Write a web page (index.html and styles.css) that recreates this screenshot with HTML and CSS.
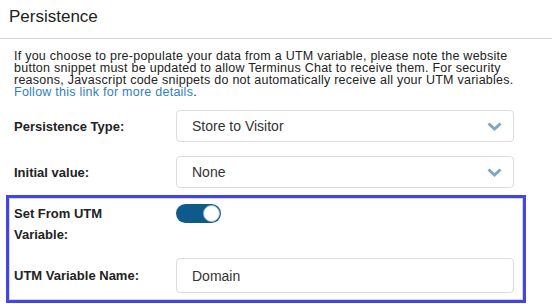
FILE: index.html
```html
<!DOCTYPE html>
<html lang="en">
<head>
<meta charset="UTF-8">
<meta name="viewport" content="width=device-width, initial-scale=1.0">
<title>Persistence</title>
<link rel="stylesheet" href="styles.css">
</head>
<body>
<div class="panel">
  <div class="panel-header">Persistence</div>

  <div class="panel-body">
    <p class="intro">
      If you choose to pre-populate your data from a UTM variable, please note the website<br>
      button snippet must be updated to allow Terminus Chat to receive them. For security<br>
      reasons, Javascript code snippets do not automatically receive all your UTM variables.<br>
      <a href="#">Follow this link for more details</a>.
    </p>

    <div class="row">
      <label class="row-label">Persistence Type:</label>
      <div class="select">
        <span>Store to Visitor</span>
        <svg class="chevron" width="15" height="9" viewBox="0 0 15 9"><polyline points="1.5,1.5 7.5,7 13.5,1.5" /></svg>
      </div>
    </div>

    <div class="row">
      <label class="row-label">Initial value:</label>
      <div class="select">
        <span>None</span>
        <svg class="chevron" width="15" height="9" viewBox="0 0 15 9"><polyline points="1.5,1.5 7.5,7 13.5,1.5" /></svg>
      </div>
    </div>

    <div class="highlight">
      <div class="row row-top">
        <label class="row-label row-label-wrap">Set From UTM Variable:</label>
        <span class="toggle"><span class="knob"></span></span>
      </div>

      <div class="row row-last">
        <label class="row-label">UTM Variable Name:</label>
        <div class="text-input">Domain</div>
      </div>
    </div>
  </div>
</div>
</body>
</html>
```

FILE: styles.css
```css
body {
  margin: 0;
  font-family: "Liberation Sans", Arial, sans-serif;
  color: #222;
  background: #fff;
}
.panel {
  width: 552px;
}
.panel-header {
  padding: 7px 9px 11px;
  font-size: 17px;
  line-height: 20px;
  color: #222;
  border-bottom: 1px solid #d6d6d6;
}
.panel-body {
  padding: 0 38px 0 14px;
}
.intro {
  margin: 11px 0 12px;
  font-size: 12.5px;
  line-height: 12px;
  letter-spacing: 0.25px;
  white-space: nowrap;
  color: #222;
}
.intro a {
  color: #2f7fbf;
  text-decoration: none;
}
.row {
  display: flex;
  align-items: center;
  margin-bottom: 14px;
}
.row-label {
  flex: 0 0 162px;
  font-size: 13px;
  font-weight: bold;
  color: #222;
}
.select, .text-input {
  flex: 1;
  display: flex;
  align-items: center;
  justify-content: space-between;
  box-sizing: border-box;
  height: 32px;
  padding: 0 11px 0 15px;
  border: 1px solid #dcdcdc;
  border-radius: 4px;
  font-size: 14px;
  color: #333;
}
.text-input {
  height: 35px;
}
.chevron polyline {
  fill: none;
  stroke: #7fa6c6;
  stroke-width: 3;
}
.highlight {
  margin: -7px -12px 0 -8px;
  padding: 5px 9px 7px 5px;
  border: 3px solid #4346e0;
  box-shadow: inset 0 0 0 1px #d4d4dc;
}
.row-top {
  align-items: flex-start;
  margin-bottom: 13px;
}
.row-label-wrap {
  flex-basis: 140px;
  margin-right: 22px;
  line-height: 21px;
}
.row-last {
  margin-bottom: 0;
}
.toggle {
  display: flex;
  justify-content: flex-end;
  align-items: center;
  box-sizing: border-box;
  width: 45px;
  height: 19px;
  margin-top: 1px;
  padding: 1px;
  border-radius: 10px;
  background: #0e5a8b;
}
.knob {
  box-sizing: border-box;
  width: 17px;
  height: 17px;
  border-radius: 50%;
  background: #fff;
  border: 1px solid #9ab4cc;
}
```
